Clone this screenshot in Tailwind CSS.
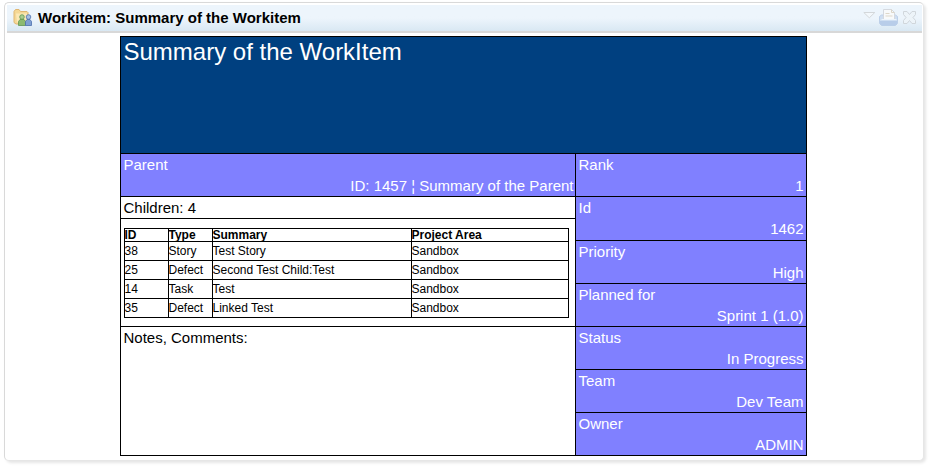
<!DOCTYPE html>
<html lang="en">
<head>
<meta charset="utf-8">
<title>Workitem: Summary of the Workitem</title>
<script src="https://cdn.jsdelivr.net/npm/@tailwindcss/browser@4"></script>
</head>
<body class="h-[468px] overflow-hidden bg-white pt-[2px] pl-[4px] font-['Liberation_Sans',Arial,sans-serif] text-black">
<section class="h-[459px] w-[920px] rounded-[5px] border border-[#d9d9d9] border-b-[#e6e6e6] border-r-[#e6e6e6] bg-white pt-[2px] pr-px pl-[2px] shadow-[2px_2px_3px_rgba(0,0,0,0.1)]">
  <header class="flex h-[28px] items-center border-b-2 border-[#d8d8d8] bg-linear-to-b from-[#edf5fc] from-50% to-[#d9e8f3] pr-[5px] pl-[6px]">
    <svg class="h-[20px] w-[20px] shrink-0" viewBox="0 0 20 20">
      <path d="M1 3.500 2.500 1.500H6l1.500 2H14l1 1v10l-2 1.500H3L1 14.500z" fill="#f5d896" stroke="#dfb672"/>
      <path d="M3 5.500h11v9H4z" fill="#fce9b8"/>
      <path d="M5.500 17.500v-4l1.500-2h4l1.500 2v4z" fill="#8cba70" stroke="#5f9550" stroke-width=".8"/>
      <circle cx="9" cy="9" r="2.300" fill="#a8cc8f" stroke="#5f9550" stroke-width=".8"/>
      <path d="M12.500 17.500v-4l1.500-2h3l1.500 2v4z" fill="#7f9fd2" stroke="#4b70ad" stroke-width=".8"/>
      <circle cx="15.500" cy="9" r="2.300" fill="#a7bfe3" stroke="#4b70ad" stroke-width=".8"/>
    </svg>
    <h1 class="ml-[5px] text-[15px] leading-[18px] font-bold whitespace-nowrap">Workitem: Summary of the Workitem</h1>
    <div class="ml-auto flex h-[22px] items-start">
      <svg class="h-[22px] w-[54px]" viewBox="0 0 54 22" fill="none">
        <path d="M.8 5.500h11L6.300 10.800z" fill="#f3f8fc" stroke="#d3d7da"/>
        <path d="M16.500 9.500l2-1.500h14l2 1.500v7l-2 2h-14l-2-2z" fill="#cfdff2" stroke="#bdd0e9"/>
        <path d="M17 14h17v3l-2 1.500H19L17 17z" fill="#b8cde9"/>
        <path d="M20.500 12.500v-10h8l3 3v7z" fill="#f8fafb" stroke="#d5d9df"/>
        <path d="M28.500 2.500v3h3M22.500 6.500h4M22.500 9h7" stroke="#ddd7c9"/>
        <path d="M18.500 12.500h15" stroke="#edf5fc"/>
        <path d="M40.500 4.500h3.500l2.500 3 2.500-3h3.500v3l-2.500 3 2.500 3v3H49l-2.500-3-2.500 3h-3.500v-3l2.500-3-2.500-3z" fill="#edf4f9" stroke="#d0d6db"/>
      </svg>
    </div>
  </header>

  <main class="mt-[3px] ml-[113px] flex h-[420px] w-[687px] flex-col gap-px bg-black p-px text-[15px] leading-[17px]">
    <h2 class="h-[116px] bg-[#004080] pt-px pl-[2.5px] text-[24px] leading-[28px] text-white">Summary of the WorkItem</h2>
    <div class="grid h-[301px] grid-cols-[454px_230px] gap-px">
      <div class="flex flex-col gap-px">
        <div class="flex h-[42px] flex-col justify-between bg-[#8080ff] pt-[2px] pr-[1.5px] pb-[2px] pl-[2.5px] text-white"><span>Parent</span><span class="self-end">ID: 1457 ¦ Summary of the Parent</span></div>
        <div class="h-[21px] bg-white pt-[2px] pl-[2.5px]">Children: 4</div>
        <div class="h-[107px] bg-white pt-[9px] pl-[3px]">
          <div class="grid w-[445px] grid-cols-[43px_43px_198px_156px] grid-rows-[12px_18px_18px_18px_18px] gap-px bg-black p-px text-[12px] leading-[18px] whitespace-nowrap *:bg-white *:-indent-[0.5px]">
            <b class="leading-[13px]">ID</b><b class="leading-[13px]">Type</b><b class="leading-[13px]">Summary</b><b class="leading-[13px]">Project Area</b>
            <span>38</span><span>Story</span><span>Test Story</span><span>Sandbox</span>
            <span>25</span><span>Defect</span><span>Second Test Child:Test</span><span>Sandbox</span>
            <span>14</span><span>Task</span><span>Test</span><span>Sandbox</span>
            <span>35</span><span>Defect</span><span>Linked Test</span><span>Sandbox</span>
          </div>
        </div>
        <div class="h-[128px] bg-white pt-[2px] pl-[2.5px]">Notes, Comments:</div>
      </div>
      <div class="grid grid-rows-[42px_43px_42px_42px_42px_42px_42px] gap-px text-white *:flex *:flex-col *:bg-[#8080ff] *:gap-[4px] *:pt-[2px] *:pr-[2.5px] *:pl-[2.5px]">
        <div><span>Rank</span><span class="self-end">1</span></div>
        <div><span>Id</span><span class="self-end">1462</span></div>
        <div><span>Priority</span><span class="self-end">High</span></div>
        <div><span>Planned for</span><span class="self-end">Sprint 1 (1.0)</span></div>
        <div><span>Status</span><span class="self-end">In Progress</span></div>
        <div><span>Team</span><span class="self-end">Dev Team</span></div>
        <div><span>Owner</span><span class="self-end">ADMIN</span></div>
      </div>
    </div>
  </main>
</section>
</body>
</html>
